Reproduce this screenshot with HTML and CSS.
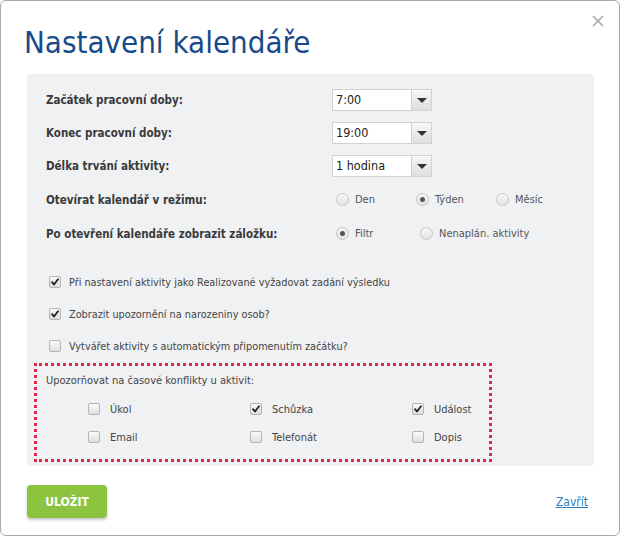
FILE: index.html
```html
<!DOCTYPE html>
<html lang="cs">
<head>
<meta charset="utf-8">
<title>Nastavení kalendáře</title>
<link rel="stylesheet" href="styles.css">
</head>
<body>
<div class="dialog">
  <a class="close" href="#" aria-label="Zavřít">
    <svg width="12" height="12" viewBox="0 0 12 12"><path d="M1 1L11 11M11 1L1 11" stroke="#a8a8a8" stroke-width="1.6" fill="none"/></svg>
  </a>
  <h1 class="title">Nastavení kalendáře</h1>
  <div class="panel">
    <div class="rows">
      <div class="row">
        <span class="label">Začátek pracovní doby:</span>
        <div class="select"><span class="value">7:00</span><span class="arrow"></span></div>
      </div>
      <div class="row">
        <span class="label">Konec pracovní doby:</span>
        <div class="select"><span class="value">19:00</span><span class="arrow"></span></div>
      </div>
      <div class="row">
        <span class="label">Délka trvání aktivity:</span>
        <div class="select"><span class="value">1 hodina</span><span class="arrow"></span></div>
      </div>
      <div class="row row-radio">
        <span class="label">Otevírat kalendář v režimu:</span>
        <div class="radios">
          <label class="opt w80"><span class="radio"></span>Den</label>
          <label class="opt w80"><span class="radio on"></span>Týden</label>
          <label class="opt"><span class="radio"></span>Měsíc</label>
        </div>
      </div>
      <div class="row row-radio">
        <span class="label">Po otevření kalendáře zobrazit záložku:</span>
        <div class="radios">
          <label class="opt w84"><span class="radio on"></span>Filtr</label>
          <label class="opt"><span class="radio"></span>Nenaplán. aktivity</label>
        </div>
      </div>
    </div>

    <div class="checks">
      <label class="check-row"><span class="cb on"><svg viewBox="0 0 11 11"><path d="M2.2 5.6L4.4 8.2L8.8 2.4" /></svg></span>Při nastavení aktivity jako Realizované vyžadovat zadání výsledku</label>
      <label class="check-row"><span class="cb on"><svg viewBox="0 0 11 11"><path d="M2.2 5.6L4.4 8.2L8.8 2.4" /></svg></span>Zobrazit upozornění na narozeniny osob?</label>
      <label class="check-row"><span class="cb"></span>Vytvářet aktivity s automatickým připomenutím začátku?</label>
    </div>

    <div class="conflicts">
      <div class="conf-title">Upozorňovat na časové konflikty u aktivit:</div>
      <div class="conf-grid">
        <label class="citem"><span class="cb"></span>Úkol</label>
        <label class="citem"><span class="cb on"><svg viewBox="0 0 11 11"><path d="M2.2 5.6L4.4 8.2L8.8 2.4" /></svg></span>Schůzka</label>
        <label class="citem"><span class="cb on"><svg viewBox="0 0 11 11"><path d="M2.2 5.6L4.4 8.2L8.8 2.4" /></svg></span>Událost</label>
        <label class="citem"><span class="cb"></span>Email</label>
        <label class="citem"><span class="cb"></span>Telefonát</label>
        <label class="citem"><span class="cb"></span>Dopis</label>
      </div>
    </div>
  </div>
  <div class="footer">
    <button class="save">ULOŽIT</button>
    <a class="link" href="#">Zavřít</a>
  </div>
</div>
</body>
</html>
```

FILE: styles.css
```css
* { box-sizing: border-box; }
html, body { margin: 0; padding: 0; background: #fff; }
body {
  font-family: "DejaVu Sans Condensed", "DejaVu Sans", sans-serif;
  font-stretch: condensed;
  font-size: 11px;
  color: #444;
}
.dialog {
  position: relative;
  width: 620px;
  height: 536px;
  border: 1px solid #a9a9a9;
  border-radius: 6px;
  background: #fff;
  padding: 0 25px 0 26px;
}
.close {
  position: absolute;
  top: 14px;
  right: 15px;
  display: block;
  width: 12px;
  height: 12px;
}
.close svg { display: block; }
.title {
  margin: 21px 0 12px -3px;
  font-size: 31px;
  line-height: 40px;
  font-weight: normal;
  color: #174a8a;
}
.panel {
  background: #f0f1f3;
  border-radius: 3px;
  padding: 15px 0 4px 0;
  height: 392px;
}
.rows {
  display: flex;
  flex-direction: column;
  gap: 11px;
  padding-left: 19px;
}
.row {
  display: grid;
  grid-template-columns: 286px auto;
  align-items: center;
  height: 22px;
}
.row-radio { height: 23px; }
.label {
  font-weight: bold;
  font-size: 11.5px;
  color: #3a3a3a;
}
.select {
  display: flex;
  width: 100px;
  height: 22px;
  border: 1px solid #d2d2d2;
  background: #fff;
}
.value {
  flex: 1;
  padding-left: 3px;
  line-height: 20px;
  font-size: 12.5px;
  color: #222;
}
.arrow {
  width: 20px;
  height: 20px;
  border-left: 1px solid #d0d0d0;
  background: linear-gradient(#f7f7f7, #dedede);
  position: relative;
}
.arrow::after {
  content: "";
  position: absolute;
  left: 5px;
  top: 8px;
  border-left: 5px solid transparent;
  border-right: 5px solid transparent;
  border-top: 5px solid #333;
}
.radios {
  display: flex;
  align-items: center;
  padding-left: 4px;
}
.opt {
  display: flex;
  align-items: center;
  gap: 6px;
  color: #555;
}
.w80 { width: 80px; }
.w84 { width: 84px; }
.radio {
  width: 13px;
  height: 13px;
  border-radius: 50%;
  border: 1px solid #c6c6c6;
  background: linear-gradient(#f6f6f6, #e4e4e4);
  position: relative;
}
.radio.on::after {
  content: "";
  position: absolute;
  left: 3px;
  top: 3px;
  width: 5px;
  height: 5px;
  border-radius: 50%;
  background: #555;
}
.checks {
  margin-top: 26px;
  padding-left: 22px;
  display: flex;
  flex-direction: column;
  gap: 10px;
}
.check-row {
  display: flex;
  align-items: center;
  gap: 8px;
  height: 22px;
  color: #444;
  font-size: 10.8px;
}
.cb {
  width: 12px;
  height: 12px;
  border: 1px solid #b4b4b4;
  border-radius: 2px;
  background: linear-gradient(#fafafa, #dedede);
  flex: none;
  display: flex;
}
.cb svg { width: 10px; height: 10px; }
.cb path {
  fill: none;
  stroke: #222;
  stroke-width: 2;
  stroke-linecap: round;
  stroke-linejoin: round;
}
.conflicts {
  margin: 6px 0 0 7px;
  width: 458px;
  height: 99px;
  border: 3px dotted #e0264d;
  padding: 7px 0 0 9px;
}
.conf-title {
  line-height: 16px;
  color: #444;
}
.conf-grid {
  display: grid;
  grid-template-columns: 162px 162px auto;
  grid-auto-rows: 28px;
  padding: 6px 0 0 42px;
}
.citem {
  display: flex;
  align-items: center;
  gap: 9px;
  color: #444;
}
.citem .cb { margin-right: 1px; }
.footer {
  display: flex;
  justify-content: space-between;
  align-items: center;
  margin-top: 19px;
  padding-right: 6px;
}
.save {
  width: 80px;
  height: 33px;
  border: none;
  border-radius: 4px;
  background: #8cc43f;
  color: #fff;
  font-family: inherit;
  font-stretch: condensed;
  font-weight: bold;
  font-size: 12px;
  box-shadow: 0 2px 3px rgba(0,0,0,0.22);
}
.link {
  color: #2a7fb8;
  text-decoration: underline;
  font-size: 12px;
}
```
